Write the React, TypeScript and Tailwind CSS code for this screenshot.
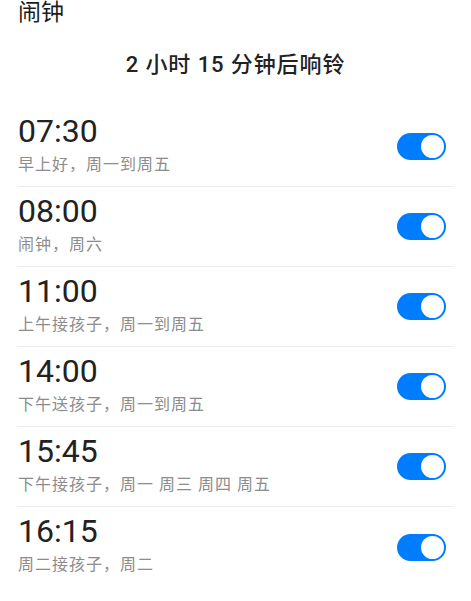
import React from "react";

const alarms = [
  { time: "07:30", label: "早上好，周一到周五" },
  { time: "08:00", label: "闹钟，周六" },
  { time: "11:00", label: "上午接孩子，周一到周五" },
  { time: "14:00", label: "下午送孩子，周一到周五" },
  { time: "15:45", label: "下午接孩子，周一 周三 周四 周五" },
  { time: "16:15", label: "周二接孩子，周二" },
];

function Toggle() {
  return (
    <div className="mr-[7px] flex h-[27px] w-[49px] items-center justify-end rounded-full bg-[#007dff] px-[2px]">
      <div className="h-[23px] w-[23px] rounded-full bg-white" />
    </div>
  );
}

export default function App() {
  return (
    <div
      className="min-h-[601px] w-[471px] bg-white"
      style={{ fontFamily: "Roboto, 'Noto Sans CJK SC', sans-serif" }}
    >
      <div className="h-[107px] px-[18px]">
        <div className="text-[23px] leading-[25px] text-[#1c1c1c]">闹钟</div>
        <div className="mt-[25px] text-center text-[22px] font-medium leading-[30px] tracking-[0.9px] text-[#222]">
          2 小时 15 分钟后响铃
        </div>
      </div>
      <div className="px-[18px]">
        {alarms.map((a, i) => (
          <div
            key={a.time}
            className={
              "flex h-[80px] items-center justify-between " +
              (i < alarms.length - 1 ? "border-b border-[#ebebeb]" : "")
            }
          >
            <div className="flex h-full flex-col pt-[6px]">
              <div className="text-[32px] leading-[36px] text-[#222]">{a.time}</div>
              <div className="mt-[5px] text-[16px] leading-[22px] tracking-[1px] text-[#8c8c8c]">
                {a.label}
              </div>
            </div>
            <Toggle />
          </div>
        ))}
      </div>
    </div>
  );
}
